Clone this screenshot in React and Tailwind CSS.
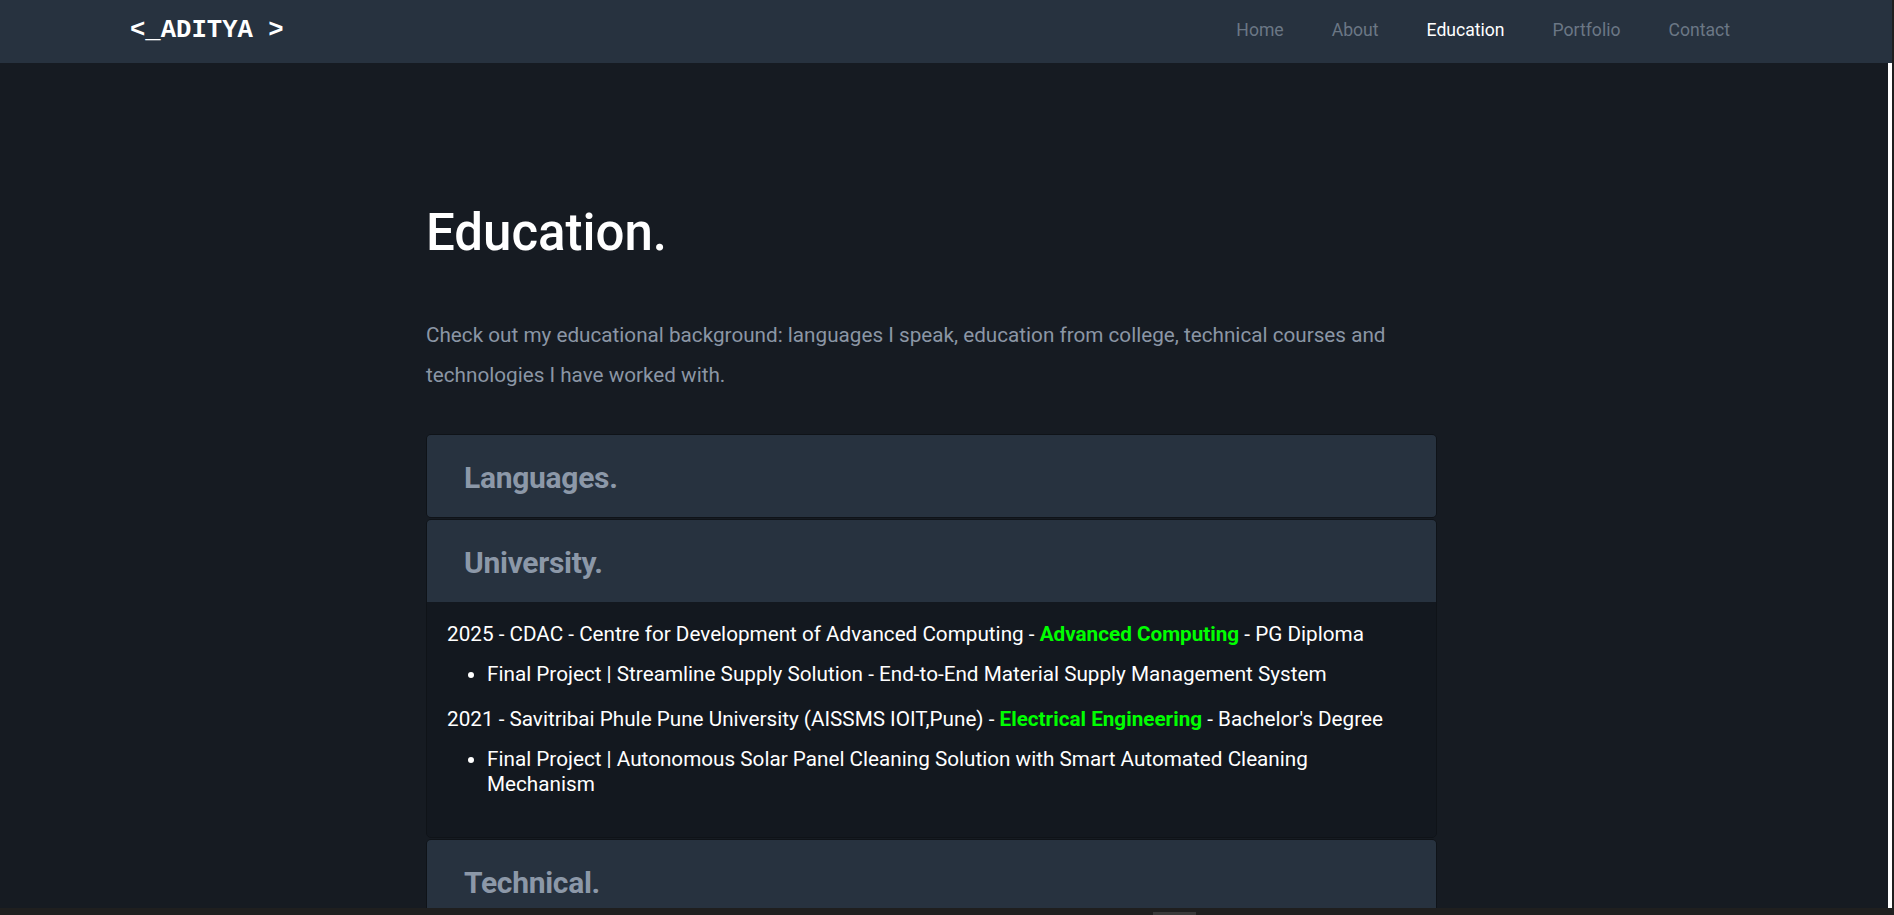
import React from "react";

const links = ["Home", "About", "Education", "Portfolio", "Contact"];

function CardHeader({ title }) {
  return (
    <div className="h-[82px] flex items-center pl-[37px] pt-[2px] bg-[#27323f]">
      <h2 className="text-[30px] font-bold text-[#8c98a8] tracking-[-0.3px]">{title}</h2>
    </div>
  );
}

export default function App() {
  return (
    <div className="h-screen flex flex-col bg-[#1f1f1f] overflow-hidden font-['Roboto',sans-serif]">
      <div className="flex-1 min-h-0 flex flex-col mr-[2px] overflow-hidden">
        {/* Navbar */}
        <nav className="h-[63px] shrink-0 flex items-center justify-between pl-[130px] pr-[138px] bg-[#27323f]">
          <span className="font-['Liberation_Mono',monospace] font-bold text-[25.6px] text-white whitespace-pre">
            {"<_ADITYA >"}
          </span>
          <ul className="flex items-center pb-[3px]">
            {links.map((l) => (
              <li key={l}>
                <a
                  href="#"
                  className={
                    "px-6 text-[17.6px] " +
                    (l === "Education" ? "text-white" : "text-[#6b7785]")
                  }
                >
                  {l}
                </a>
              </li>
            ))}
          </ul>
        </nav>

        <div className="flex-1 min-h-0 flex">
          <main className="flex-1 overflow-hidden bg-[#161b22]">
            <section className="pl-[426px] pt-[139px]">
              <div className="w-[1011px]">
                <h1 className="text-[51px] leading-[62px] font-medium text-white">Education.</h1>
                <p className="mt-[51px] text-[20.7px] leading-[40px] text-[#8b96a5]">
                  Check out my educational background: languages I speak, education from college,
                  technical courses and technologies I have worked with.
                </p>

                {/* Accordion */}
                <div className="mt-[39px] flex flex-col gap-[1px]">
                  <div className="border border-[#0f1318] rounded-[5px] overflow-hidden">
                    <CardHeader title="Languages." />
                  </div>

                  <div className="border border-[#0f1318] rounded-[5px] overflow-hidden">
                    <CardHeader title="University." />
                    <div className="bg-[#13181f] pl-5 pr-10 pt-5 pb-5 text-[20.7px] leading-[25px] text-white">
                      <p>
                        2025 - CDAC - Centre for Development of Advanced Computing -{" "}
                        <span className="font-bold text-[#00ff00]">Advanced Computing</span> - PG Diploma
                      </p>
                      <ul className="list-disc pl-10 mt-[15px] mb-5">
                        <li>Final Project | Streamline Supply Solution - End-to-End Material Supply Management System</li>
                      </ul>
                      <p>
                        2021 - Savitribai Phule Pune University (AISSMS IOIT,Pune) -{" "}
                        <span className="font-bold text-[#00ff00]">Electrical Engineering</span> - Bachelor's Degree
                      </p>
                      <ul className="list-disc pl-10 mt-[15px] mb-5">
                        <li>
                          Final Project | Autonomous Solar Panel Cleaning Solution with Smart Automated Cleaning
                          Mechanism
                        </li>
                      </ul>
                    </div>
                  </div>

                  <div className="border border-[#0f1318] rounded-[5px] overflow-hidden">
                    <CardHeader title="Technical." />
                  </div>
                </div>
              </div>
            </section>
          </main>
          {/* scrollbar strip */}
          <div className="w-[4px] bg-white" />
        </div>
      </div>
      <div className="h-[7px] shrink-0 pl-[1153px]">
        <div className="w-[43px] h-[3px] mt-[4px] bg-[#3a3a3a]" />
      </div>
    </div>
  );
}
